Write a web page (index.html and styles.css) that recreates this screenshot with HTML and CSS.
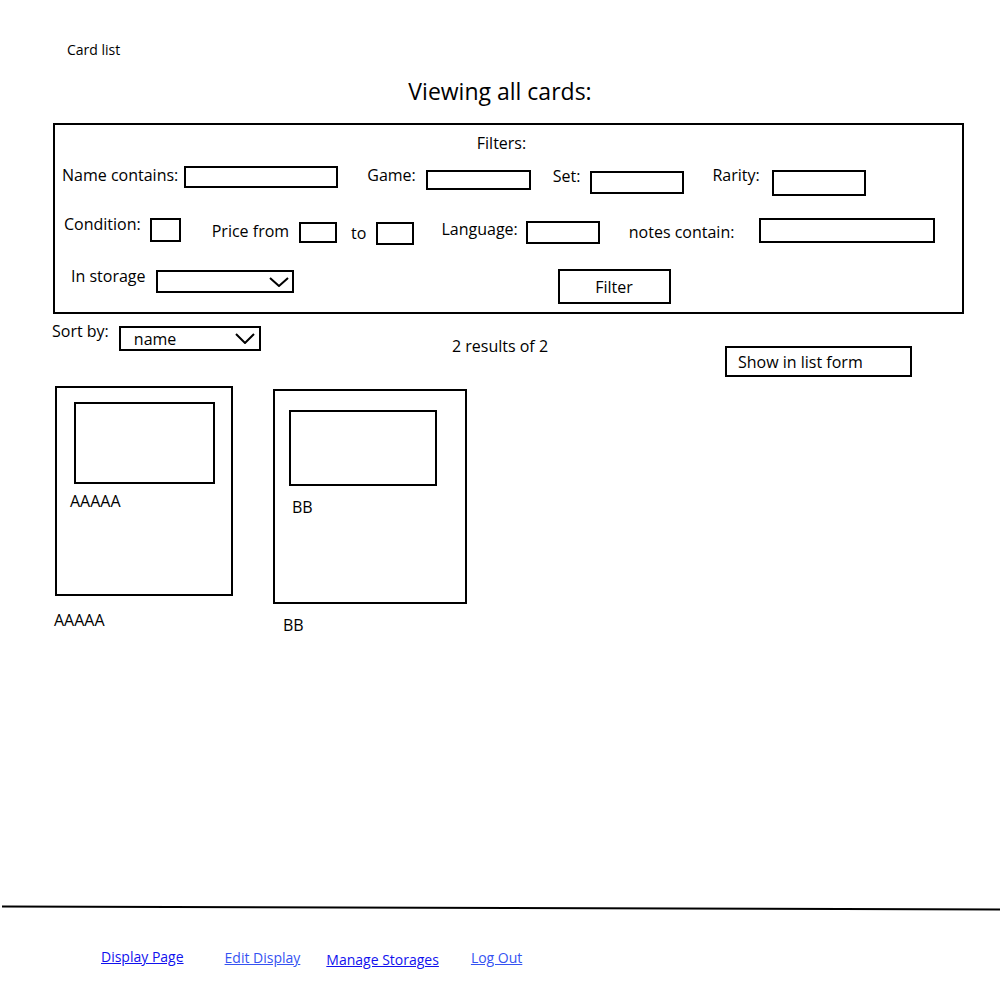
FILE: index.html
```html
<!DOCTYPE html>
<html lang="en">
<head>
    <meta charset="UTF-8">
    <meta name="viewport" content="width=device-width, initial-scale=1.0">
    <title>Card list</title>
    <link rel="stylesheet" href="styles.css">
</head>
<body>

<div class="page">
    <header class="topbar">Card list</header>

    <h1 class="title">Viewing all cards:</h1>

    <!-- Filters -->
    <form class="filters">
        <div class="filters-title">Filters:</div>

        <div class="filter-row row-1">
            <label class="field f-name">Name contains:<input type="text"></label>
            <label class="field f-game">Game:<input type="text"></label>
            <label class="field f-set">Set:<input type="text"></label>
            <label class="field f-rarity">Rarity:<input type="text"></label>
        </div>

        <div class="filter-row row-2">
            <label class="field f-condition">Condition:<input type="text"></label>
            <label class="field f-price">Price from<input type="text"></label>
            <label class="field f-to">to<input type="text"></label>
            <label class="field f-language">Language:<input type="text"></label>
            <label class="field f-notes">notes contain:<input type="text"></label>
        </div>

        <div class="filter-row row-3">
            <div class="field f-storage">
                <span>In storage</span>
                <div class="dropdown storage-select">
                    <span class="dropdown-value"></span>
                    <svg class="chevron" width="20" height="10" viewBox="0 0 20 10"><polyline points="1,1 10,9 19,1" fill="none" stroke="#000" stroke-width="2"/></svg>
                </div>
            </div>
            <button type="button" class="btn filter-btn">Filter</button>
        </div>
    </form>

    <!-- Sort / results -->
    <div class="toolbar">
        <div class="sort">
            <span class="sort-label">Sort by:</span>
            <div class="dropdown sort-select">
                <span class="dropdown-value">name</span>
                <svg class="chevron" width="20" height="11" viewBox="0 0 20 11"><polyline points="1,1 10,10 19,1" fill="none" stroke="#000" stroke-width="2"/></svg>
            </div>
        </div>
        <div class="result-count">2 results of 2</div>
        <button type="button" class="btn list-btn">Show in list form</button>
    </div>

    <!-- Cards -->
    <div class="cards">
        <div class="card-item card-a">
            <div class="card">
                <div class="card-image"></div>
                <div class="card-name">AAAAA</div>
            </div>
            <div class="card-caption">AAAAA</div>
        </div>
        <div class="card-item card-b">
            <div class="card">
                <div class="card-image"></div>
                <div class="card-name">BB</div>
            </div>
            <div class="card-caption">BB</div>
        </div>
    </div>

    <footer class="footer">
        <svg class="divider" width="1000" height="8" viewBox="0 0 1000 8"><line x1="2" y1="2.5" x2="1000" y2="5.5" stroke="#000" stroke-width="2"/></svg>
        <nav class="footer-links">
            <a href="#" class="link-display">Display Page</a>
            <a href="#" class="link-edit light">Edit Display</a>
            <a href="#" class="link-storages">Manage Storages</a>
            <a href="#" class="link-logout light">Log Out</a>
        </nav>
    </footer>
</div>

</body>
</html>
```

FILE: styles.css
```css
body {
    margin: 0;
    font-family: "Open Sans", "Noto Sans", Arial, sans-serif;
    font-size: 16px;
    line-height: 20px;
    color: #000;
    background: #fff;
}
.page {
    min-height: 1000px;
    display: flex;
    flex-direction: column;
}
.topbar {
    font-size: 14px;
    line-height: 18px;
    padding: 41px 0 0 67px;
}
.title {
    margin: 17px 0 0 0;
    font-size: 23px;
    line-height: 30px;
    font-weight: normal;
    text-align: center;
}

/* filter box */
.filters {
    margin: 17px 0 0 53px;
    width: 911px;
    height: 191px;
    box-sizing: border-box;
    border: 2px solid #000;
}
.filters-title {
    margin-top: 8px;
    text-align: center;
    padding-right: 14px;
}
.filter-row {
    display: flex;
    align-items: flex-start;
}
.row-1 { margin-top: 11px; height: 50px; }
.row-2 { height: 50px; }
.field {
    display: flex;
    align-items: flex-start;
}
.field input {
    box-sizing: border-box;
    border: 2px solid #000;
    border-radius: 0;
    padding: 0;
    font: inherit;
    background: #fff;
}
/* row 1 */
.f-name { margin: 1px 0 0 7px; }
.f-name input { margin: 1px 0 0 6px; width: 154px; height: 22px; }
.f-game { margin: 1px 0 0 29px; }
.f-game input { margin: 5px 0 0 10px; width: 105px; height: 20px; }
.f-set { margin: 2px 0 0 22px; }
.f-set input { margin: 5px 0 0 10px; width: 94px; height: 23px; }
.f-rarity { margin: 1px 0 0 28px; }
.f-rarity input { margin: 5px 0 0 12px; width: 94px; height: 26px; }
/* row 2 */
.f-condition { margin: 0 0 0 9px; }
.f-condition input { margin: 4px 0 0 9px; width: 31px; height: 24px; }
.f-price { margin: 7px 0 0 31px; }
.f-price input { margin: 1px 0 0 10px; width: 38px; height: 21px; }
.f-to { margin: 9px 0 0 14px; }
.f-to input { margin: -1px 0 0 10px; width: 38px; height: 23px; }
.f-language { margin: 5px 0 0 27px; }
.f-language input { margin: 2px 0 0 8px; width: 74px; height: 23px; }
.f-notes { margin: 8px 0 0 29px; }
.f-notes input { margin: -4px 0 0 25px; width: 176px; height: 25px; }
/* row 3 */
.f-storage { margin: 2px 0 0 16px; }
.dropdown {
    box-sizing: border-box;
    border: 2px solid #000;
    display: flex;
    align-items: center;
    justify-content: space-between;
}
.storage-select {
    margin: 4px 0 0 10px;
    width: 138px;
    height: 23px;
    padding-right: 3px;
}
.btn {
    box-sizing: border-box;
    border: 2px solid #000;
    border-radius: 0;
    background: #fff;
    font: inherit;
    color: #000;
    padding: 0;
    cursor: pointer;
}
.filter-btn {
    margin: 5px 0 0 264px;
    width: 113px;
    height: 35px;
}

/* sort / results bar */
.toolbar {
    display: grid;
    grid-template-columns: 1fr auto 1fr;
    align-items: start;
    height: 72px;
}
.sort {
    display: flex;
    align-items: flex-start;
    padding-left: 52px;
}
.sort-label { margin-top: 7px; }
.sort-select {
    margin: 12px 0 0 10px;
    width: 142px;
    height: 25px;
    padding: 0 4px 0 13px;
}
.result-count { margin-top: 22px; }
.list-btn {
    justify-self: end;
    margin: 32px 88px 0 0;
    width: 187px;
    height: 31px;
    text-align: left;
    padding-left: 11px;
}

/* cards */
.cards {
    display: flex;
    align-items: flex-start;
}
.card {
    box-sizing: border-box;
    border: 2px solid #000;
}
.card-image {
    box-sizing: border-box;
    border: 2px solid #000;
}
.card-a { margin-left: 54px; }
.card-a .card { margin-left: 1px; width: 178px; height: 210px; }
.card-a .card-image { margin: 14px 0 0 17px; width: 141px; height: 82px; }
.card-a .card-name { margin: 7px 0 0 13px; }
.card-a .card-caption { margin-top: 14px; }
.card-b { margin-left: 40px; }
.card-b .card { margin-top: 3px; width: 194px; height: 215px; }
.card-b .card-image { margin: 19px 0 0 14px; width: 148px; height: 76px; }
.card-b .card-name { margin: 11px 0 0 17px; }
.card-b .card-caption { margin: 11px 0 0 10px; }

/* footer */
.footer {
    margin-top: auto;
    height: 96px;
}
.divider { display: block; }
.footer-links {
    display: flex;
    align-items: flex-start;
    font-size: 14px;
    line-height: 18px;
    padding-top: 36px;
}
.footer-links a {
    color: #1111ee;
    text-decoration: underline;
}
.footer-links a.light { color: #3553f2; }
.link-display { margin-left: 101px; }
.link-edit { margin: 1px 0 0 41px; }
.link-storages { margin: 3px 0 0 26px; }
.link-logout { margin: 1px 0 0 32px; }
```
